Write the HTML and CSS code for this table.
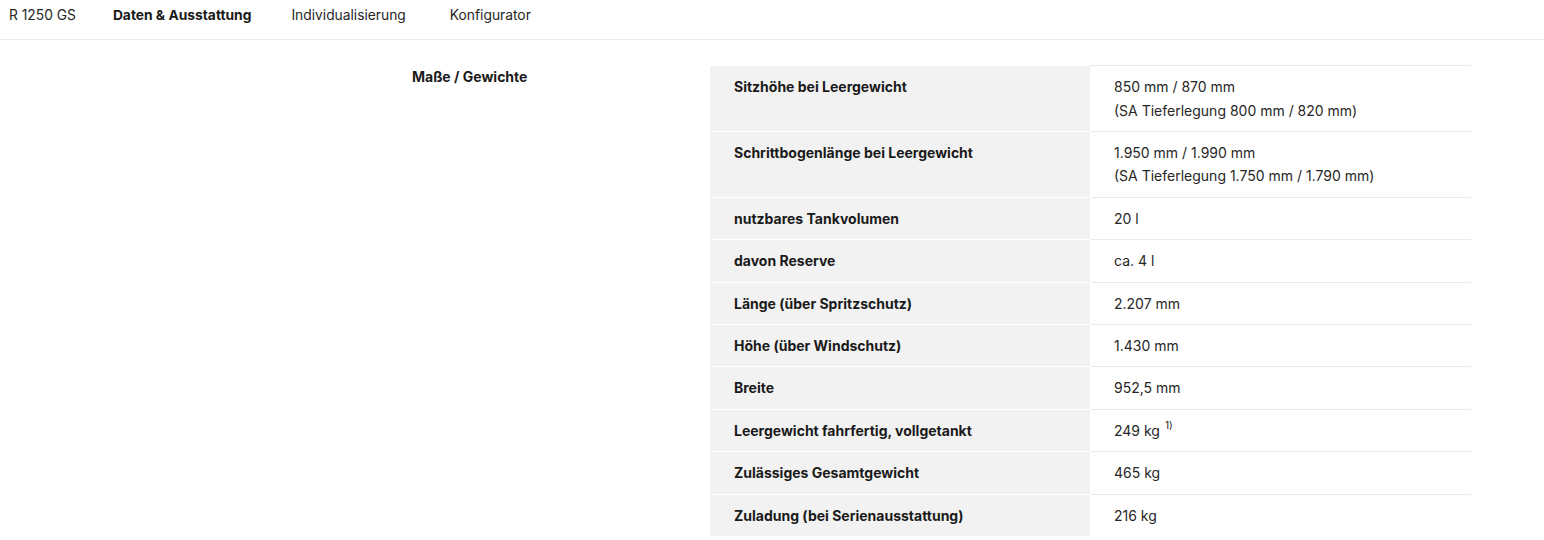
FILE: index.html
```html
<!DOCTYPE html>
<html lang="de">
<head>
    <meta charset="utf-8" />
    <title>R 1250 GS - Daten &amp; Ausstattung</title>
    <link rel="stylesheet" href="styles.css">
</head>
<body>
    <nav class="subnav">
        <a class="subnav-item model" href="#">R 1250 GS</a>
        <a class="subnav-item active" href="#">Daten &amp; Ausstattung</a>
        <a class="subnav-item wide" href="#">Individualisierung</a>
        <a class="subnav-item" href="#">Konfigurator</a>
    </nav>

    <section class="spec-section">
        <h2 class="spec-title">Maße / Gewichte</h2>
        <table class="spec-table">
            <tr>
                <th>Sitzhöhe bei Leergewicht</th>
                <td>850 mm / 870 mm<br>(SA Tieferlegung 800 mm / 820 mm)</td>
            </tr>
            <tr>
                <th>Schrittbogenlänge bei Leergewicht</th>
                <td>1.950 mm / 1.990 mm<br>(SA Tieferlegung 1.750 mm / 1.790 mm)</td>
            </tr>
            <tr>
                <th>nutzbares Tankvolumen</th>
                <td>20 l</td>
            </tr>
            <tr>
                <th>davon Reserve</th>
                <td>ca. 4 l</td>
            </tr>
            <tr>
                <th>Länge (über Spritzschutz)</th>
                <td>2.207 mm</td>
            </tr>
            <tr>
                <th>Höhe (über Windschutz)</th>
                <td>1.430 mm</td>
            </tr>
            <tr>
                <th>Breite</th>
                <td>952,5 mm</td>
            </tr>
            <tr>
                <th>Leergewicht fahrfertig, vollgetankt</th>
                <td>249 kg <sup>1)</sup></td>
            </tr>
            <tr>
                <th>Zulässiges Gesamtgewicht</th>
                <td>465 kg</td>
            </tr>
            <tr>
                <th>Zuladung (bei Serienausstattung)</th>
                <td>216 kg</td>
            </tr>
        </table>
    </section>
</body>
</html>
```

FILE: styles.css
```css
body {
	margin: 0;
	font-family: Inter, "Liberation Sans", Arial, sans-serif;
	color: #262626;
	background: #fff;
}

/* top navigation */
.subnav {
	display: flex;
	align-items: flex-start;
	height: 39px;
	padding-left: 9px;
	border-bottom: 1px solid #ececec;
	font-size: 13.8px;
}

.subnav-item {
	color: #262626;
	text-decoration: none;
	margin-right: 40px;
	padding-top: 4px;
	line-height: 22px;
}

.subnav-item.model {
	margin-right: 37px;
}

.subnav-item.wide {
	margin-right: 44px;
}

.subnav-item.active {
	font-weight: 700;
	color: #1a1a1a;
}

/* spec section */
.spec-section {
	display: grid;
	grid-template-columns: 298px 761px;
	padding-left: 412px;
	padding-top: 25px;
}

.spec-title {
	margin: 0;
	padding-top: 1px;
	font-size: 14px;
	font-weight: 700;
	line-height: 22px;
	color: #1a1a1a;
}

.spec-table {
	border-collapse: collapse;
	width: 761px;
	font-size: 14px;
	line-height: 23.5px;
}

.spec-table th,
.spec-table td {
	vertical-align: top;
	padding: 9px 24px 8.9px 24px;
	text-align: left;
}

.spec-table th {
	width: 332px;
	background: #f2f2f2;
	font-weight: 700;
	color: #1a1a1a;
	border-top: 1px solid #fff;
}

.spec-table td {
	border-top: 1px solid #ebebeb;
	border-left: 1px solid #fff;
	color: #262626;
	padding-left: 23px;
}

.spec-table tr:first-child th {
	border-top: 0;
}

.spec-table sup {
	font-size: 10px;
	line-height: 0;
	vertical-align: 7px;
	margin-left: 1px;
}
```
